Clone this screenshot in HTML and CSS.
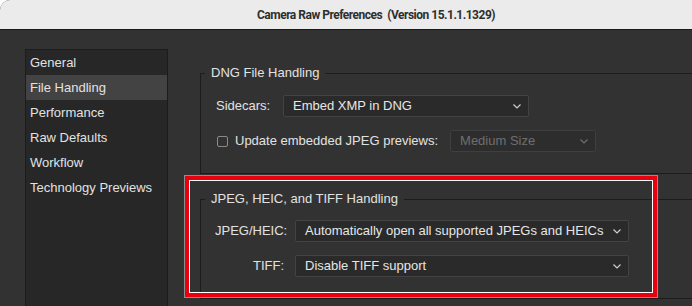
FILE: index.html
```html
<!DOCTYPE html>
<html lang="en">
<head>
    <meta charset="UTF-8">
    <meta name="viewport" content="width=device-width, initial-scale=1.0">
    <title>Camera Raw Preferences</title>
    <link rel="stylesheet" href="styles.css">
</head>
<body>
    <div class="window">
        <div class="titlebar">Camera Raw Preferences&nbsp; (Version 15.1.1.1329)</div>
        <div class="content">
            <ul class="sidebar">
                <li>General</li>
                <li class="on">File Handling</li>
                <li>Performance</li>
                <li>Raw Defaults</li>
                <li>Workflow</li>
                <li>Technology Previews</li>
            </ul>
            <div class="main">
                <fieldset class="group dng">
                    <legend>DNG File Handling</legend>
                    <div class="row">
                        <span class="label">Sidecars:</span>
                        <div class="select sidecar">
                            <span>Embed XMP in DNG</span>
                            <svg class="chev" width="8" height="5" viewBox="0 0 8 5"><polyline points="0.5,0.5 4,4 7.5,0.5"/></svg>
                        </div>
                    </div>
                    <div class="row">
                        <span class="check"></span>
                        <span class="check-label">Update embedded JPEG previews:</span>
                        <div class="select preview off">
                            <span>Medium Size</span>
                            <svg class="chev" width="8" height="5" viewBox="0 0 8 5"><polyline points="0.5,0.5 4,4 7.5,0.5"/></svg>
                        </div>
                    </div>
                </fieldset>
                <div class="highlight">
                    <fieldset class="group jpeg">
                        <legend>JPEG, HEIC, and TIFF Handling</legend>
                        <div class="row">
                            <span class="label right">JPEG/HEIC:</span>
                            <div class="select wide">
                                <span>Automatically open all supported JPEGs and HEICs</span>
                                <svg class="chev" width="8" height="5" viewBox="0 0 8 5"><polyline points="0.5,0.5 4,4 7.5,0.5"/></svg>
                            </div>
                        </div>
                        <div class="row">
                            <span class="label right">TIFF:</span>
                            <div class="select wide">
                                <span>Disable TIFF support</span>
                                <svg class="chev" width="8" height="5" viewBox="0 0 8 5"><polyline points="0.5,0.5 4,4 7.5,0.5"/></svg>
                            </div>
                        </div>
                    </fieldset>
                </div>
            </div>
        </div>
    </div>
</body>
</html>
```

FILE: styles.css
```css
*{
    margin: 0;
    padding: 0;
    box-sizing: border-box;
    list-style: none;
}
html,body{
    overflow: hidden;
    background: #fff;
}
body{
    font-family: "Liberation Sans", Arial, sans-serif;
    font-size: 13px;
    line-height: 16px;
}
.window{
    width: 752px;
    height: 306px;
    border-radius: 10px 10px 0 0;
    overflow: hidden;
    background: #323232;
}
.titlebar{
    height: 30px;
    line-height: 30px;
    text-align: center;
    font-family: Roboto, "Liberation Sans", sans-serif;
    font-size: 12px;
    font-weight: 700;
    letter-spacing: -0.5px;
    color: #2e2e2e;
    background: #ebebeb;
    border-bottom: 1px solid #1a1a1a;
}
.content{
    display: flex;
    padding: 19px 0 0 25px;
    height: 276px;
}
.sidebar{
    flex: none;
    width: 143px;
    height: 300px;
    background: #272727;
    border: 1px solid #1c1c1c;
    color: #e2e2e2;
}
.sidebar li{
    height: 25px;
    line-height: 25px;
    padding-left: 4px;
}
.sidebar li.on{
    background: #434343;
}
.main{
    flex: none;
    width: 540px;
    margin: 16px 0 0 32px;
}
.group{
    border: 1px solid #1c1c1c;
    color: #e2e2e2;
}
.group legend{
    margin-left: 4px;
    padding: 0 6px;
}
.dng{
    height: 109px;
    padding-top: 14px;
}
.dng .row{
    padding-left: 15px;
}
.jpeg{
    height: 108px;
    padding-top: 13px;
}
.jpeg .row{
    padding-left: 14px;
}
.row{
    display: flex;
    align-items: center;
    height: 22px;
    margin-bottom: 13px;
}
.label{
    width: 67px;
}
.label.right{
    width: 69px;
    margin-right: 11px;
    text-align: right;
}
.select{
    flex: none;
    display: flex;
    align-items: center;
    justify-content: space-between;
    height: 22px;
    padding: 0 7px 0 9px;
    background: #2a2a2a;
    border: 1px solid #434343;
    border-radius: 2px;
    color: #e6e6e6;
    white-space: nowrap;
}
.chev{
    fill: none;
    stroke: #cfcfcf;
    stroke-width: 1.2;
}
.sidecar{
    width: 246px;
}
.preview{
    width: 146px;
    margin-left: 12px;
}
.wide{
    width: 334px;
}
.select.off{
    background: #2d2d2d;
    border-color: #3f3f3f;
    color: #6f6f6f;
}
.select.off .chev{
    stroke: #6f6f6f;
}
.check{
    width: 11px;
    height: 11px;
    margin: 0 7px 0 1px;
    border: 1px solid #8a8a8a;
    border-radius: 2px;
}
.dng .row{
    margin-bottom: 0;
}
.dng .row + .row{
    margin-top: 13px;
}
.highlight{
    position: relative;
    margin-top: 17px;
}
.highlight::after{
    content: "";
    position: absolute;
    top: -15px;
    left: -15px;
    width: 464px;
    height: 113px;
    border: 4px solid #e8000e;
    box-shadow: inset 0 0 0 1px #fff, 0 0 0 1px rgba(255,255,255,.45);
}
```
